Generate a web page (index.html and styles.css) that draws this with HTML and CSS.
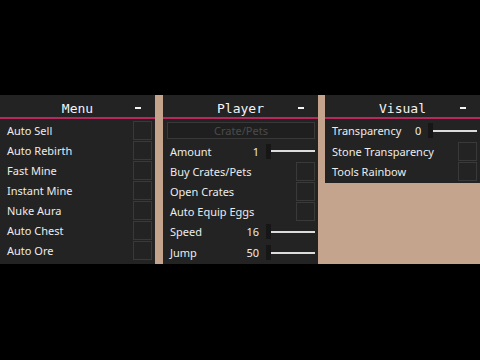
FILE: index.html
```html
<!DOCTYPE html>
<html lang="en">
<head>
  <meta charset="UTF-8">
  <title>Menu</title>
  <link rel="stylesheet" href="styles.css">
</head>
<body>
  <div class="band">
    <div class="panel">
      <div class="header"><span class="title">Menu</span><span class="min"></span></div>
      <div class="rows">
        <div class="row"><span>Auto Sell</span><span class="box"></span></div>
        <div class="row"><span>Auto Rebirth</span><span class="box"></span></div>
        <div class="row"><span>Fast Mine</span><span class="box"></span></div>
        <div class="row"><span>Instant Mine</span><span class="box"></span></div>
        <div class="row"><span>Nuke Aura</span><span class="box"></span></div>
        <div class="row"><span>Auto Chest</span><span class="box"></span></div>
        <div class="row"><span>Auto Ore</span><span class="box"></span></div>
      </div>
    </div>

    <div class="panel">
      <div class="header"><span class="title">Player</span><span class="min"></span></div>
      <div class="rows">
        <div class="btn">Crate/Pets</div>
        <div class="row slider-row amount"><span>Amount</span><span class="val">1</span><span class="knob"></span><span class="track"></span></div>
        <div class="row"><span>Buy Crates/Pets</span><span class="box"></span></div>
        <div class="row"><span>Open Crates</span><span class="box"></span></div>
        <div class="row"><span>Auto Equip Eggs</span><span class="box"></span></div>
        <div class="row slider-row"><span>Speed</span><span class="val">16</span><span class="knob"></span><span class="track"></span></div>
        <div class="row slider-row"><span>Jump</span><span class="val">50</span><span class="knob"></span><span class="track"></span></div>
      </div>
    </div>

    <div class="panel short">
      <div class="header"><span class="title">Visual</span><span class="min"></span></div>
      <div class="rows">
        <div class="row slider-row"><span>Transparency</span><span class="val">0</span><span class="knob"></span><span class="track"></span></div>
        <div class="row"><span>Stone Transparency</span><span class="box"></span></div>
        <div class="row"><span>Tools Rainbow</span><span class="box"></span></div>
      </div>
    </div>
  </div>
</body>
</html>
```

FILE: styles.css
```css
body {
  margin: 0;
  width: 480px;
  height: 360px;
  background: #000;
  font-family: "Noto Sans", sans-serif;
  color: #ececec;
  overflow: hidden;
}
.band {
  margin-top: 95px;
  height: 169px;
  background: #c4a48c;
  display: flex;
  align-items: flex-start;
  gap: 8px;
}
.panel {
  width: 155px;
  height: 169px;
  background: #232323;
  box-sizing: border-box;
}
.panel.short {
  height: 88px;
  margin-left: -1px;
}
.header {
  height: 24px;
  padding-top: 4px;
  box-sizing: border-box;
  border-bottom: 2px solid #b8285c;
  display: flex;
  align-items: center;
  justify-content: center;
  position: relative;
  font-family: "DejaVu Sans Mono", monospace;
  font-size: 13px;
  color: #f4f4f4;
}
.min {
  position: absolute;
  right: 14px;
  top: 12px;
  width: 6px;
  height: 1.5px;
  background: #f4f4f4;
}
.rows {
  padding: 1px 0 0 0;
}
.row {
  height: 20px;
  display: flex;
  align-items: center;
  padding: 0 3px 0 7px;
  font-size: 11px;
}
.row span:first-child {
  flex: 1;
}
.box {
  width: 17px;
  height: 17px;
  border: 1px solid #393939;
  margin-top: 1px;
}
.btn {
  margin: 2px 3px 2px 4px;
  height: 15px;
  border: 1px solid #383838;
  background: #1f1f1f;
  color: #4b4b4b;
  font-size: 11px;
  line-height: 15px;
  text-align: center;
}
.slider-row {
  height: 21px;
}
.slider-row.amount {
  height: 20px;
}
.val {
  width: 20px;
  text-align: right;
}
.knob {
  width: 5px;
  height: 15px;
  background: #161616;
  margin-left: 7px;
}
.track {
  width: 44px;
  height: 2px;
  background: #dcdcdc;
}
```
